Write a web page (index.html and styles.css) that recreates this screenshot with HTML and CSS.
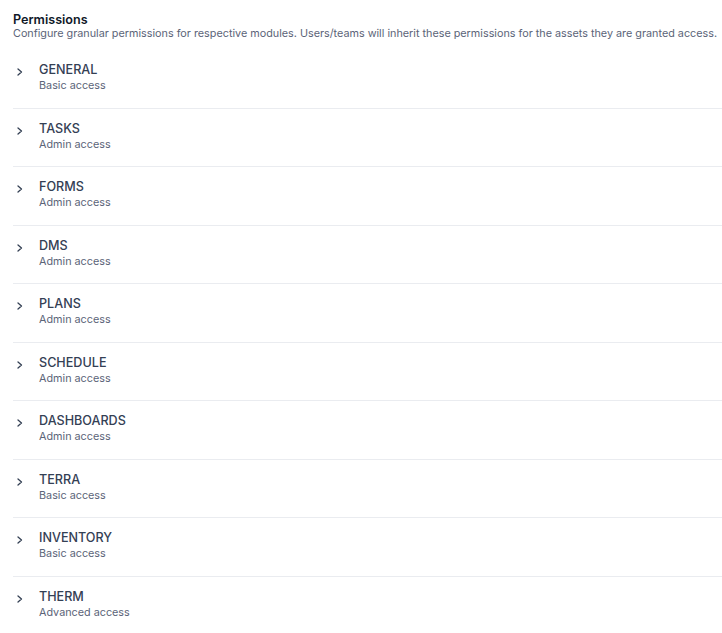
FILE: index.html
```html
<!DOCTYPE html>
<html>
<head>
<meta charset="utf-8">
<link rel="stylesheet" href="styles.css">
</head>
<body>
<section class="panel">
  <header class="head">
    <h1 class="title">Permissions</h1>
    <p class="desc">Configure granular permissions for respective modules. Users/teams will inherit these permissions for the assets they are granted access.</p>
  </header>
  <ul class="list">
    <li class="row"><svg class="chev" viewBox="0 0 10 10"><path d="M3 2L6.5 5L3 8"/></svg><div class="text"><div class="name">GENERAL</div><div class="sub">Basic access</div></div></li>
    <li class="row"><svg class="chev" viewBox="0 0 10 10"><path d="M3 2L6.5 5L3 8"/></svg><div class="text"><div class="name">TASKS</div><div class="sub">Admin access</div></div></li>
    <li class="row"><svg class="chev" viewBox="0 0 10 10"><path d="M3 2L6.5 5L3 8"/></svg><div class="text"><div class="name">FORMS</div><div class="sub">Admin access</div></div></li>
    <li class="row"><svg class="chev" viewBox="0 0 10 10"><path d="M3 2L6.5 5L3 8"/></svg><div class="text"><div class="name">DMS</div><div class="sub">Admin access</div></div></li>
    <li class="row"><svg class="chev" viewBox="0 0 10 10"><path d="M3 2L6.5 5L3 8"/></svg><div class="text"><div class="name">PLANS</div><div class="sub">Admin access</div></div></li>
    <li class="row"><svg class="chev" viewBox="0 0 10 10"><path d="M3 2L6.5 5L3 8"/></svg><div class="text"><div class="name">SCHEDULE</div><div class="sub">Admin access</div></div></li>
    <li class="row"><svg class="chev" viewBox="0 0 10 10"><path d="M3 2L6.5 5L3 8"/></svg><div class="text"><div class="name">DASHBOARDS</div><div class="sub">Admin access</div></div></li>
    <li class="row"><svg class="chev" viewBox="0 0 10 10"><path d="M3 2L6.5 5L3 8"/></svg><div class="text"><div class="name">TERRA</div><div class="sub">Basic access</div></div></li>
    <li class="row"><svg class="chev" viewBox="0 0 10 10"><path d="M3 2L6.5 5L3 8"/></svg><div class="text"><div class="name">INVENTORY</div><div class="sub">Basic access</div></div></li>
    <li class="row"><svg class="chev" viewBox="0 0 10 10"><path d="M3 2L6.5 5L3 8"/></svg><div class="text"><div class="name">THERM</div><div class="sub">Advanced access</div></div></li>
  </ul>
</section>
</body>
</html>
```
FILE: styles.css
```css
html, body {
  margin: 0;
  padding: 0;
  background: #ffffff;
}
body {
  font-family: Inter, "Noto Sans", sans-serif;
  color: #101828;
}
.panel {
  padding: 13px 0 0 13px;
}
.head {
  margin-bottom: 9px;
}
.title {
  margin: 0;
  font-size: 12.6px;
  line-height: 14px;
  font-weight: 600;
  color: #101828;
}
.desc {
  margin: 0;
  font-size: 10.8px;
  line-height: 14px;
  color: #5b6478;
  white-space: nowrap;
}
.list {
  list-style: none;
  margin: 0;
  padding: 0;
}
.row {
  display: flex;
  align-items: flex-start;
  gap: 14px;
  padding: 12px 0 14.5px 0;
  border-bottom: 1px solid #eaecf0;
}
.row:last-child {
  border-bottom: none;
}
.chev {
  flex: none;
  width: 10px;
  height: 10px;
  margin: 5px 0 0 2px;
  fill: none;
  stroke: #344054;
  stroke-width: 1.3;
  stroke-linecap: round;
  stroke-linejoin: round;
}
.name {
  font-size: 12.6px;
  line-height: 16px;
  font-weight: 500;
  color: #344054;
}
.sub {
  margin-top: 1px;
  font-size: 10.8px;
  line-height: 14px;
  color: #5b6478;
}
```
